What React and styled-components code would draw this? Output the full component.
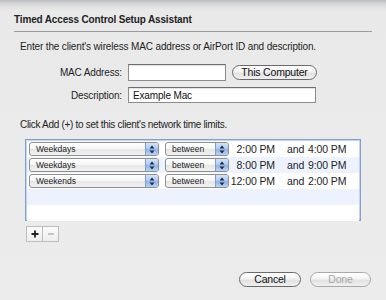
import React from "react";
import styled, { createGlobalStyle } from "styled-components";

const Global = createGlobalStyle`
  html, body { margin: 0; padding: 0; }
  body {
    width: 386px; height: 300px; overflow: hidden;
    background: #ececec;
    font-family: "Liberation Sans", Arial, sans-serif;
    color: #1a1a1a;
  }
`;

const Sheet = styled.div`
  width: 386px;
  height: 300px;
  box-sizing: border-box;
  background: linear-gradient(to bottom, #b9bcc0 0px, #d6d7d9 4px, #e9e9e9 10px, #ececec 100%);
  display: flex;
  flex-direction: column;
  padding: 14px 14px 0 14px;
`;

const Title = styled.div`
  font-size: 10px;
  line-height: 12px;
  font-weight: bold;
  letter-spacing: -0.15px;
  color: #222;
  padding-bottom: 5px;
  border-bottom: 1px solid #9a9a9a;
`;

const Para = styled.div`
  font-size: 10px;
  line-height: 13px;
  letter-spacing: ${(p) => p.$ls ?? -0.15}px;
  color: #1e1e1e;
  margin-left: 6px;
  margin-top: ${(p) => p.$top}px;
  white-space: nowrap;
`;

const FormGrid = styled.div`
  display: grid;
  grid-template-columns: 108px auto;
  column-gap: 6px;
  row-gap: 6px;
  margin-top: 11px;
  align-items: center;
`;

const Label = styled.div`
  text-align: right;
  font-size: 10px;
  letter-spacing: -0.15px;
  color: #1e1e1e;
`;

const FieldRow = styled.div`
  display: flex;
  align-items: center;
  gap: 6px;
`;

const TextField = styled.div`
  box-sizing: border-box;
  width: ${(p) => p.$w}px;
  height: ${(p) => p.$h}px;
  background: #fff;
  border: 1px solid #8c8c8c;
  border-top-color: #6e6e6e;
  box-shadow: inset 0 1px 1px rgba(0,0,0,0.12);
  font-size: 10px;
  letter-spacing: -0.15px;
  padding: 0 4px;
  display: flex;
  align-items: center;
  color: #111;
`;

const PillButton = styled.div`
  box-sizing: border-box;
  width: ${(p) => p.$w}px;
  height: 15px;
  border-radius: 8px;
  border: 1px solid ${(p) => (p.$disabled ? "#a9a9a9" : "#6a6a6a")};
  background: linear-gradient(to bottom, #ffffff 0%, #f3f3f3 45%, #e2e2e2 55%, #f0f0f0 100%);
  font-size: 10.5px;
  letter-spacing: -0.2px;
  color: ${(p) => (p.$disabled ? "#a8a8a8" : "#111")};
  display: flex;
  align-items: center;
  justify-content: center;
  line-height: 1;
`;

const Table = styled.div`
  box-sizing: border-box;
  margin: 8px 0 0 11px;
  width: 336px;
  height: 82px;
  flex: none;
  border: 1px solid #7fa1d1;
  box-shadow: inset 0 0 0 1px #c3d5f0;
  background: #fff;
  padding: 1px 1px;
  display: flex;
  flex-direction: column;
`;

const Row = styled.div`
  height: 16px;
  flex: none;
  display: flex;
  align-items: center;
  background: ${(p) => (p.$alt ? "#edf3fe" : "#ffffff")};
  padding-left: 2px;
`;

const Popup = styled.div`
  box-sizing: border-box;
  width: ${(p) => p.$w}px;
  height: 14px;
  border: 1px solid #8f8f8f;
  border-radius: 3px;
  background: linear-gradient(to bottom, #ffffff 0%, #f5f5f5 50%, #e6e6e6 51%, #f2f2f2 100%);
  display: flex;
  align-items: stretch;
  overflow: hidden;
  margin-right: ${(p) => p.$mr}px;
  flex: none;
`;

const PopupText = styled.div`
  flex: 1;
  font-size: 8.5px;
  padding-left: 6px;
  display: flex;
  align-items: center;
  color: #222;
`;

const Stepper = styled.div`
  width: 12px;
  background: linear-gradient(to bottom, #d3e3f8 0%, #aecaf0 50%, #8cb2e7 51%, #b8d2f4 100%);
  border-left: 1px solid #7d9fcf;
  display: flex;
  align-items: center;
  justify-content: center;
`;

const Time = styled.div`
  flex: none;
  white-space: nowrap;
  font-size: 10.5px;
  letter-spacing: -0.1px;
  color: #1e1e1e;
  width: ${(p) => p.$w}px;
  padding-left: ${(p) => p.$pl || 0}px;
  box-sizing: border-box;
  text-align: ${(p) => p.$align || "left"};
`;

const Segs = styled.div`
  display: flex;
  margin: 5px 0 0 12px;
`;

const Seg = styled.div`
  box-sizing: border-box;
  width: 17px;
  height: 16px;
  border: 1px solid #bdbdbd;
  margin-left: ${(p) => (p.$first ? 0 : -1)}px;
  background: linear-gradient(to bottom, #fbfbfb, #eeeeee);
  display: flex;
  align-items: center;
  justify-content: center;
`;

const Footer = styled.div`
  display: flex;
  justify-content: flex-end;
  gap: 9px;
  margin-top: 30px;
  padding-right: 1px;
`;

const Arrows = () => (
  <svg width="6" height="9" viewBox="0 0 6 9">
    <path d="M3 0.5 L5.5 3.5 L0.5 3.5 Z" fill="#1b2c48" />
    <path d="M3 8.5 L5.5 5.5 L0.5 5.5 Z" fill="#1b2c48" />
  </svg>
);

const Plus = () => (
  <svg width="8" height="8" viewBox="0 0 8 8">
    <path d="M4 0.5 V7.5 M0.5 4 H7.5" stroke="#222" strokeWidth="1.8" />
  </svg>
);

const Minus = () => (
  <svg width="8" height="8" viewBox="0 0 8 8">
    <path d="M1 4 H7" stroke="#b0b0b0" strokeWidth="1.4" />
  </svg>
);

const rows = [
  { day: "Weekdays", from: "2:00 PM", to: "4:00 PM" },
  { day: "Weekdays", from: "8:00 PM", to: "9:00 PM" },
  { day: "Weekends", from: "12:00 PM", to: "2:00 PM" },
];

export default function App() {
  return (
    <>
      <Global />
      <Sheet>
        <Title>Timed Access Control Setup Assistant</Title>
        <Para $top={8}>Enter the client's wireless MAC address or AirPort ID and description.</Para>
        <FormGrid>
          <Label>MAC Address:</Label>
          <FieldRow>
            <TextField $w={98} $h={17} />
            <PillButton $w={85}>This Computer</PillButton>
          </FieldRow>
          <Label>Description:</Label>
          <FieldRow>
            <TextField $w={188} $h={16}>Example Mac</TextField>
          </FieldRow>
        </FormGrid>
        <Para $top={15} $ls={-0.3}>Click Add (+) to set this client's network time limits.</Para>
        <Table>
          {rows.map((r, i) => (
            <Row key={i} $alt={i % 2 === 1}>
              <Popup $w={130} $mr={6}>
                <PopupText>{r.day}</PopupText>
                <Stepper><Arrows /></Stepper>
              </Popup>
              <Popup $w={64} $mr={0}>
                <PopupText>between</PopupText>
                <Stepper><Arrows /></Stepper>
              </Popup>
              <Time $w={46} $align="right">{r.from}</Time>
              <Time $w={33} $pl={12}>and</Time>
              <Time $w={50}>{r.to}</Time>
            </Row>
          ))}
          <Row $alt />
          <Row />
        </Table>
        <Segs>
          <Seg $first><Plus /></Seg>
          <Seg><Minus /></Seg>
        </Segs>
        <Footer>
          <PillButton $w={62}>Cancel</PillButton>
          <PillButton $w={61} $disabled>Done</PillButton>
        </Footer>
      </Sheet>
    </>
  );
}
